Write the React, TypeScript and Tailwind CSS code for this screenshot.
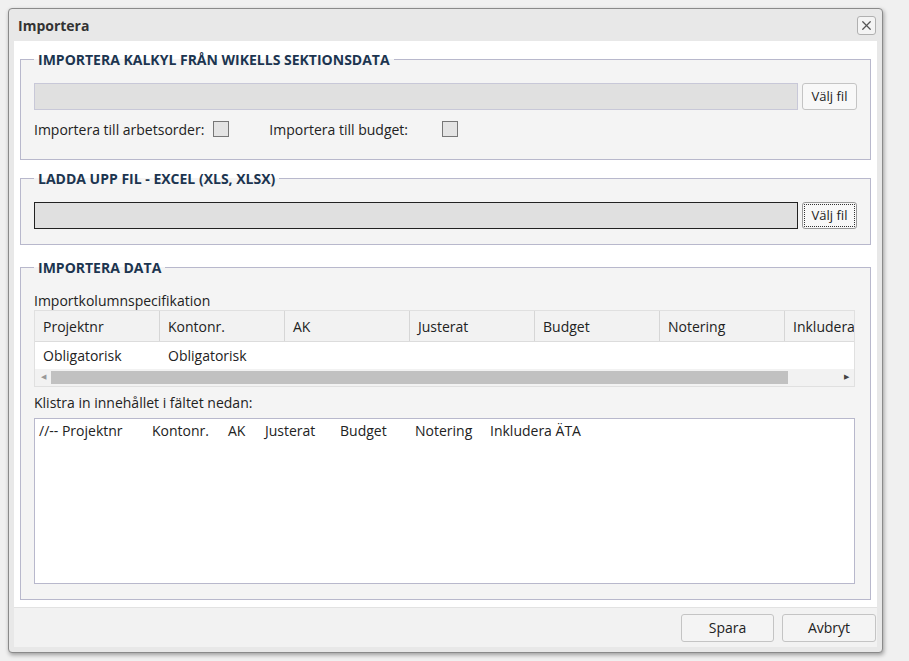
import { X } from 'lucide-react';

const cols = ['Projektnr', 'Kontonr.', 'AK', 'Justerat', 'Budget', 'Notering', 'Inkludera ÄTA'];
const pasteCols: [string, string][] = [
    ['//-- Projektnr', 'w-[113px]'],
    ['Kontonr.', 'w-[76px]'],
    ['AK', 'w-[37px]'],
    ['Justerat', 'w-[75px]'],
    ['Budget', 'w-[75px]'],
    ['Notering', 'w-[75px]'],
    ['Inkludera ÄTA', ''],
];

function Legend({ children }: { children: string }) {
    return <legend className="px-[4px] text-[14px] font-bold text-[#1c3550]">{children}</legend>;
}

export default function App() {
    return (
        <div className="w-[909px] h-[661px] bg-[#f0f0f0] pt-[8px] pl-[8px] text-[#222] text-[14px]" style={{ fontFamily: '"Open Sans", "Noto Sans", sans-serif' }}>
            <div className="w-[875px] h-[645px] bg-[#e8e8e8] border border-[#8a8a8a] rounded-[4px] shadow-[1px_2px_4px_rgba(0,0,0,0.35)] flex flex-col px-[5px]">
                {/* titel */}
                <div className="h-[32px] shrink-0 flex items-center justify-between pl-[4px] pr-[1px]">
                    <span className="text-[14px] font-bold text-[#333]">Importera</span>
                    <button className="w-[19px] h-[19px] border border-[#b0b0b0] rounded-[3px] bg-[#f4f4f4] flex items-center justify-center">
                        <X className="w-[15px] h-[15px] text-[#555]" strokeWidth={2} />
                    </button>
                </div>
                <div className="flex-1 bg-white flex flex-col mb-[5px]">
                    <div className="px-[6px] pt-[8px] flex flex-col gap-[8px]">
                        <fieldset className="border border-[#b8b8cc] bg-[#f4f4f4] h-[111px] px-[13px]">
                            <Legend>IMPORTERA KALKYL FRÅN WIKELLS SEKTIONSDATA</Legend>
                            <div className="flex gap-[4px] mt-[13px]">
                                <div className="w-[764px] h-[27px] bg-[#e0e0e0] border border-[#c8c8d8]" />
                                <button className="w-[55px] h-[27px] border border-[#c4c4c4] rounded-[3px] bg-[#f8f8f8] text-[13px]">Välj fil</button>
                            </div>
                            <div className="flex items-center mt-[4px] h-[30px]">
                                <span>Importera till arbetsorder:</span>
                                <span className="ml-[9px] w-[16px] h-[16px] border border-[#777] bg-[#e4e4e4]" />
                                <span className="ml-[40px]">Importera till budget:</span>
                                <span className="ml-[34px] w-[16px] h-[16px] border border-[#777] bg-[#e4e4e4]" />
                            </div>
                        </fieldset>
                        <fieldset className="border border-[#b8b8cc] bg-[#f4f4f4] h-[77px] px-[13px]">
                            <Legend>LADDA UPP FIL - EXCEL (XLS, XLSX)</Legend>
                            <div className="flex gap-[4px] mt-[13px]">
                                <div className="w-[764px] h-[27px] bg-[#e0e0e0] border border-[#222]" />
                                <button className="w-[55px] h-[27px] border border-[#999] rounded-[3px] bg-[#f8f8f8] text-[13px] outline-1 outline-dotted outline-[#333] -outline-offset-[3px]">Välj fil</button>
                            </div>
                        </fieldset>
                        <fieldset className="border border-[#b8b8cc] bg-[#f4f4f4] h-[343px] px-[13px] mt-[4px]">
                            <Legend>IMPORTERA DATA</Legend>
                            <div className="mt-[14px] leading-[18px]">Importkolumnspecifikation</div>
                            <div className="w-[821px] border border-[#e0e0e0] bg-white overflow-hidden">
                                <div className="flex h-[31px] bg-[#f2f2f2] border-b border-[#dcdcdc] whitespace-nowrap">
                                    {cols.map(c => (
                                        <div key={c} className="w-[125px] shrink-0 px-[8px] flex items-center border-r border-[#d6d6d6]">{c}</div>
                                    ))}
                                </div>
                                <div className="flex h-[27px] items-center whitespace-nowrap">
                                    <div className="w-[125px] px-[8px]">Obligatorisk</div>
                                    <div className="w-[125px] px-[8px]">Obligatorisk</div>
                                </div>
                                <div className="flex h-[17px] items-center bg-[#f2f2f2]">
                                    <span className="w-[16px] text-[7px] text-[#999] text-center">◀</span>
                                    <div className="w-[737px] h-[13px] bg-[#c1c1c1]" />
                                    <div className="flex-1" />
                                    <span className="w-[16px] text-[7px] text-[#444] text-center">▶</span>
                                </div>
                            </div>
                            <div className="mt-[6px] leading-[20px]">Klistra in innehållet i fältet nedan:</div>
                            <div className="mt-[5px] w-[821px] h-[166px] bg-white border border-[#b8b8cc] px-[4px] py-[1px] flex items-start whitespace-nowrap">
                                {pasteCols.map(([t, w]) => (
                                    <span key={t} className={w}>{t}</span>
                                ))}
                            </div>
                        </fieldset>
                    </div>
                    <div className="mt-auto h-[40px] bg-[#f2f2f2] border-t border-[#e2e2e2] flex items-center justify-end gap-[8px] pr-[1px]">
                        <button className="w-[93px] h-[28px] border border-[#c4c4c4] rounded-[3px] bg-[#f4f4f4]">Spara</button>
                        <button className="w-[94px] h-[28px] border border-[#c4c4c4] rounded-[3px] bg-[#f4f4f4]">Avbryt</button>
                    </div>
                </div>
            </div>
        </div>
    );
}
